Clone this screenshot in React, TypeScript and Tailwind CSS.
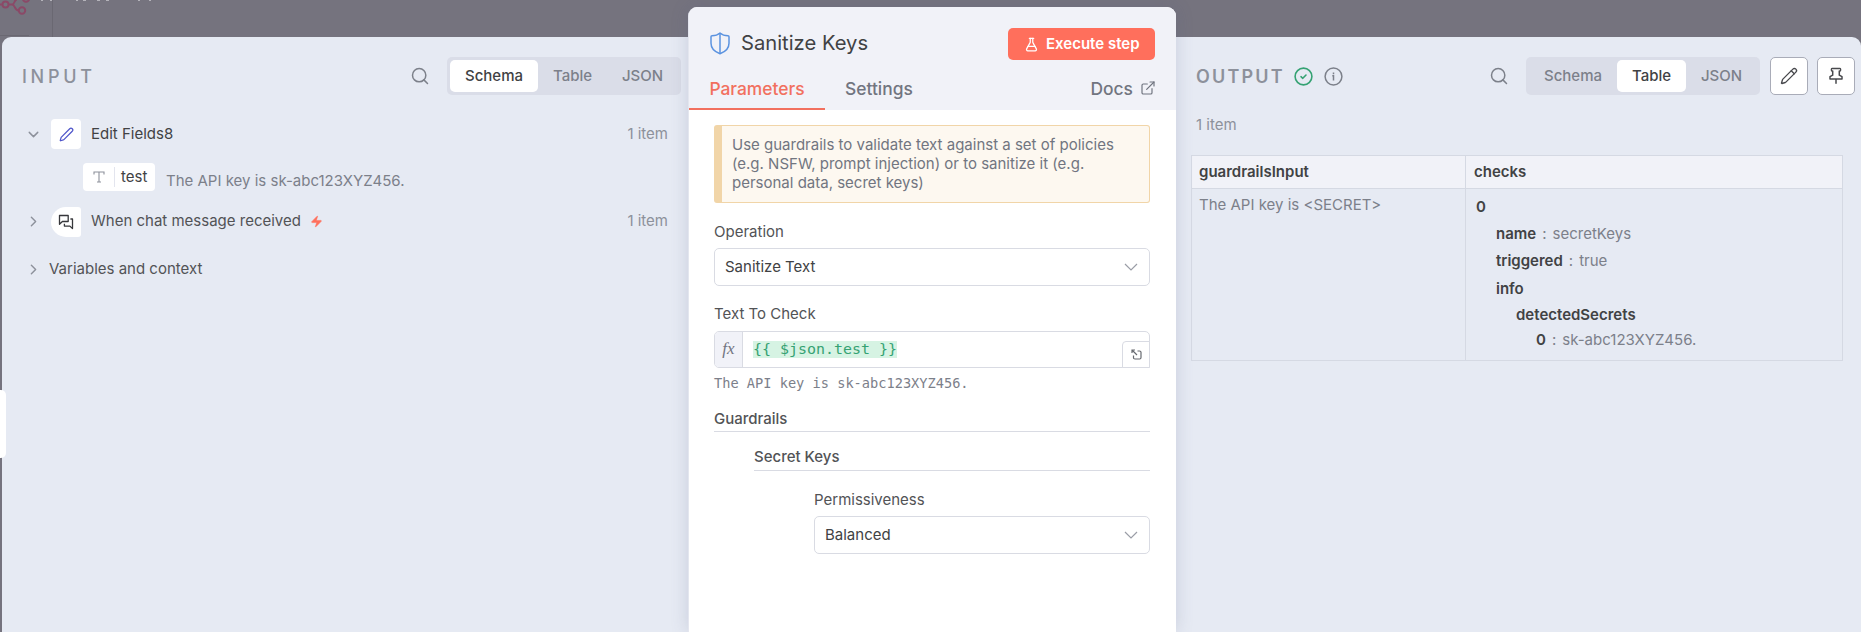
import type { ReactNode } from 'react';
import { ChevronDown, ChevronRight, ExternalLink, FlaskConical, Pen, Pencil, Search, Zap } from 'lucide-react';

const views = [
  { label: 'Schema', width: 'w-[88px]' },
  { label: 'Table', width: 'w-[69px]' },
  { label: 'JSON', width: 'w-[71px]' },
];

function ViewSwitch({ active }: { active: string }) {
  return (
    <div className="flex h-[38px] w-[234px] shrink-0 items-center rounded-[5px] bg-[#dadde8] px-[3px]">
      {views.map((v) => (
        <button
          key={v.label}
          className={`h-8 rounded-[5px] text-[15px] font-medium ${v.width} ${
            v.label === active ? 'bg-white text-[#414244]' : 'text-[#7c808a]'
          }`}
        >
          {v.label}
        </button>
      ))}
    </div>
  );
}

function Select({ value }: { value: string }) {
  return (
    <div className="flex h-[38px] items-center justify-between rounded-[5px] border border-[#d9dbe3] pr-2 pl-[10px] text-[15px] text-[#414244]">
      <span>{value}</span>
      <svg width="20" height="20" viewBox="0 0 20 20" fill="none" stroke="#9a9da6" strokeWidth="1.2">
        <path d="m4 7 6 6 6-6" />
      </svg>
    </div>
  );
}

function IconButton({ children }: { children: ReactNode }) {
  return (
    <button className="flex size-[38px] shrink-0 items-center justify-center rounded-[5px] border border-[#a9acb8] bg-white text-[#48494d]">
      {children}
    </button>
  );
}

function ChatIcon() {
  return (
    <svg width="16" height="16" viewBox="0 0 16 16" fill="none" stroke="#36373b" strokeWidth="1.3" strokeLinejoin="round">
      <path d="M1.5 1.5h8.7v6H4.4L1.5 10.3z" />
      <path d="M12.4 5h2.1v9.6l-2.6-2.5H6.4V9.8" />
    </svg>
  );
}

function ShieldIcon() {
  return (
    <svg width="20" height="23" viewBox="0 0 20 23" fill="none" stroke="#5b93e0" strokeWidth="1.5" strokeLinejoin="round" className="-mt-[2px]">
      <path d="M10 1C8 2.8 5 3.8 2 3.8c-.6 0-1 .4-1 1v6.500c0 5 3.200 8.400 9 10.400 5.800-2 9-5.400 9-10.400V4.800c0-.6-.4-1-1-1C15 3.800 12 2.800 10 1z" />
      <path d="M10 1v20.500" />
    </svg>
  );
}

function SuccessIcon() {
  return (
    <svg width="19" height="19" viewBox="0 0 19 19" fill="none" stroke="#35a273" strokeWidth="1.6" strokeLinecap="round" strokeLinejoin="round">
      <circle cx="9.5" cy="9.5" r="8.400" />
      <path d="m7 9.700 1.800 1.600L12 8" />
    </svg>
  );
}

function InfoIcon() {
  return (
    <svg width="19" height="19" viewBox="0 0 19 19" fill="none" stroke="#7c808a" strokeWidth="1.5">
      <circle cx="9.5" cy="9.500" r="8.400" />
      <path d="M9.500 5.500v1.700M8.300 8.800h1.200v4.600" />
    </svg>
  );
}

function PinIcon() {
  return (
    <svg width="16" height="18" viewBox="0 0 16 18" fill="none" stroke="#48494d" strokeWidth="1.5" strokeLinejoin="round" strokeLinecap="round">
      <path d="M4 1.500h8c.8 0 .8 2.500 0 2.500h-.7v4.200l2.700 1.500V12H2V9.700l2.700-1.500V4H4c-.8 0-.8-2.500 0-2.500zM8 12v4.300" />
    </svg>
  );
}

function InputPanel() {
  return (
    <section className="mt-[37px] ml-[2px] w-[686px] shrink-0 rounded-tl-[9px] bg-[#e6eaf3]">
      <header className="mt-5 flex h-[38px] items-center pl-5">
        <h2 className="flex-1 text-[18px] font-medium tracking-[3.7px] text-[#8d919b]">INPUT</h2>
        <Search size={20} strokeWidth={1.8} className="mr-[17px] text-[#7c808a]" />
        <ViewSwitch active="Schema" />
        <div className="w-[7px]" />
      </header>

      <div className="mt-6 flex h-[30px] items-center pr-[20px] pl-[23px] text-[15px]">
        <ChevronDown size={17} strokeWidth={2} className="mr-[9px] text-[#8d919b]" />
        <div className="mr-[10px] flex size-[30px] items-center justify-center rounded-[4px] bg-white">
          <Pen size={15} strokeWidth={2} className="text-[#5056ca]" />
        </div>
        <span className="flex-1 text-[#414244]">Edit Fields8</span>
        <span className="text-[#8d919b]">1 item</span>
      </div>
      <div className="mt-[14px] flex h-[29px] pl-[81px] text-[15px]">
        <div className="flex h-[28px] w-[72px] items-center rounded-[4px] bg-white">
          <span className="flex w-[31px] justify-center">
            <svg width="12" height="12" viewBox="0 0 12 12" fill="none" stroke="#8d919b" strokeWidth="1.1">
              <path d="M1 3.5V1h10v2.5M6 1v10M4 11h4" />
            </svg>
          </span>
          <span className="h-5 w-px bg-[#e3e5ee]" />
          <span className="pl-[6px] text-[#414244]">test</span>
        </div>
        <span className="mt-[7px] ml-[11px] leading-[22px] text-[#7c808a]">The API key is sk-abc123XYZ456.</span>
      </div>
      <div className="mt-[14px] flex h-[31px] items-center pr-[20px] pl-[23px] text-[15px]">
        <ChevronRight size={17} strokeWidth={2} className="mr-[9px] text-[#8d919b]" />
        <div className="mr-[10px] flex size-[30px] items-center justify-center rounded-l-[15px] rounded-r-[3px] bg-white">
          <ChatIcon />
        </div>
        <span className="text-[#525356]">When chat message received</span>
        <Zap size={13} fill="#ff6f5c" strokeWidth={1} className="ml-[9px] text-[#ff6f5c]" />
        <span className="ml-auto text-[#8d919b]">1 item</span>
      </div>
      <div className="mt-[21px] flex h-[22px] items-center pl-[23px] text-[15px] text-[#525356]">
        <ChevronRight size={17} strokeWidth={2} className="mr-[7px] text-[#8d919b]" />
        Variables and context
      </div>
    </section>
  );
}

function NodePanel() {
  return (
    <section className="z-10 mt-[7px] w-[488px] shrink-0 overflow-hidden rounded-t-[9px] border-l border-[#e4e6ef] bg-white shadow-[0_0_18px_rgba(80,90,130,0.2)]">
      <header className="h-[103px] bg-[#f1f2f8] pt-[21px]">
        <div className="flex h-8 items-center pr-[21px] pl-[21px]">
          <ShieldIcon />
          <h1 className="-mt-[2px] ml-[11px] flex-1 text-[20.2px] text-[#414244]">Sanitize Keys</h1>
          <button className="flex h-8 w-[147px] items-center rounded-[5px] bg-[#ff6f5c] pl-4 text-[15px] font-semibold text-white">
            <FlaskConical size={15} strokeWidth={2} className="mr-[7px]" />
            Execute step
          </button>
        </div>
        <nav className="mt-[7px] flex h-[43px] text-[17.4px] font-medium text-[#717580]">
          <div className="flex w-[136px] items-center justify-center border-b-2 border-[#f2705f] pt-1 text-[#f2705f]">Parameters</div>
          <div className="flex items-center border-b-2 border-transparent pt-1 pl-5">Settings</div>
          <div className="ml-auto flex items-center border-b-2 border-transparent pt-1 pr-5">
            Docs
            <ExternalLink size={16} strokeWidth={1.8} className="mb-[3px] ml-[7px]" />
          </div>
        </nav>
      </header>

      <div className="pr-[26px] pl-[25px] text-[15px] text-[#525356]">
        <p className="mt-[15px] h-[78px] rounded-[3px] border border-l-8 border-[#f1d5a8] bg-[#fdf8f0] pt-[9px] pl-[10px] leading-[19px] text-[#717580]">
          Use guardrails to validate text against a set of policies<br />
          (e.g. NSFW, prompt injection) or to sanitize it (e.g.<br />
          personal data, secret keys)
        </p>
        <div className="mt-[18px] mb-[5px] leading-[22px]">Operation</div>
        <Select value="Sanitize Text" />
        <div className="mt-[17px] mb-[6px] leading-[22px]">Text To Check</div>
        <div className="relative flex h-[37px] items-center rounded-[5px] rounded-br-none border border-[#d9dbe3]">
          <span className="flex h-full w-[28px] items-center justify-center rounded-l-[4px] border-r border-[#d9dbe3] bg-[#f1f2f8] pb-px font-['Liberation_Serif',serif] text-[17px] text-[#717580] italic">
            fx
          </span>
          <code className="ml-[10px] bg-[#d6f3e3] font-['DejaVu_Sans_Mono',monospace] text-[14.95px] leading-[17px] text-[#35a273]">
            {'{{ $json.test }}'}
          </code>
          <span className="absolute -right-px -bottom-px flex h-[27px] w-7 items-center justify-center rounded-tl-[4px] border border-[#d9dbe3] bg-white">
            <svg width="11" height="11" viewBox="0 0 11 11" fill="none" stroke="#66696f" strokeWidth="1.2">
              <path d="M1 4V1h3M1 1l5 5M6.500 2h2c.8 0 1.500.5 1.500 1.200v5.300c0 .8-.5 1.500-1.300 1.500H4c-.8 0-1.500-.5-1.500-1.300V6.500" />
            </svg>
          </span>
        </div>
        <div className="mt-1 font-['DejaVu_Sans_Mono',monospace] text-[13.65px] leading-[22px] text-[#7c808a]">
          The API key is sk-abc123XYZ456.
        </div>
        <div className="mt-[14px] h-[24px] border-b border-[#d9dbe3] leading-[22px] font-medium">Guardrails</div>
        <div className="ml-10 pt-[14px]">
          <div className="h-[25px] border-b border-[#d9dbe3] leading-[22px] font-medium">Secret Keys</div>
        </div>
        <div className="mt-[18px] ml-[100px]">
          <div className="mb-[5px] leading-[22px]">Permissiveness</div>
          <Select value="Balanced" />
        </div>
      </div>
    </section>
  );
}

const checkRows = [
  { name: '0', value: '', style: 'h-[28px] pl-[10px]' },
  { name: 'name', value: 'secretKeys', style: 'h-[26px] pl-[30px]' },
  { name: 'triggered', value: 'true', style: 'h-[28px] pl-[30px]' },
  { name: 'info', value: '', style: 'h-[28px] pl-[30px]' },
  { name: 'detectedSecrets', value: '', style: 'h-[24px] pl-[50px]' },
  { name: '0', value: 'sk-abc123XYZ456.', style: 'h-[26px] pl-[70px]' },
];

function OutputPanel() {
  return (
    <section className="mt-[37px] w-[685px] shrink-0 rounded-tr-[9px] bg-[#e6eaf3]">
      <header className="mt-5 flex h-[38px] items-center pr-[6px] pl-5">
        <h2 className="mr-[9px] text-[18px] font-semibold tracking-[2.2px] text-[#8d919b]">OUTPUT</h2>
        <div className="flex gap-[11px]">
          <SuccessIcon />
          <InfoIcon />
        </div>
        <Search size={20} strokeWidth={1.8} className="mr-[17px] ml-auto text-[#7c808a]" />
        <ViewSwitch active="Table" />
        <div className="ml-[10px] flex gap-[9px]">
          <IconButton><Pencil size={18} strokeWidth={1.8} /></IconButton>
          <IconButton><PinIcon /></IconButton>
        </div>
      </header>
      <div className="mt-[19px] ml-5 text-[15px] leading-[22px] text-[#8d919b]">1 item</div>
      <table className="mt-[19px] ml-[15px] w-[652px] table-fixed border-collapse text-[15px] text-[#7c808a]">
        <colgroup>
          <col className="w-[274px]" />
          <col />
        </colgroup>
        <thead>
          <tr className="h-[33px] bg-[#f1f2f8] text-left text-[#414244]">
            <th className="border border-[#d5d9e3] px-[7px] font-semibold">guardrailsInput</th>
            <th className="border border-[#d5d9e3] px-2 font-semibold">checks</th>
          </tr>
        </thead>
        <tbody>
          <tr className="h-[172px]">
            <td className="border border-[#d5d9e3] px-[7px] pt-[5px] align-top">The API key is &lt;SECRET&gt;</td>
            <td className="border border-[#d5d9e3] pt-1 align-top">
              {checkRows.map((row, i) => (
                <div key={i} className={`flex items-center ${row.style}`}>
                  <span className="font-semibold text-[#414244]">{row.name}</span>
                  {row.value && (
                    <>
                      <span className="mx-[6px]">:</span>
                      <span>{row.value}</span>
                    </>
                  )}
                </div>
              ))}
            </td>
          </tr>
        </tbody>
      </table>
    </section>
  );
}

// Dimmed corner of the canvas behind the dialog
function Backdrop() {
  return (
    <svg className="absolute top-0 left-0" width="180" height="37" viewBox="0 0 180 37" fill="none">
      <path d="M52.5 0v37M0 35.5h29" stroke="#6a6872" />
      <path
        d="M41 0h2M50 0h2M76 0h2M83 0h3M97 0h3M106 0h3M138 0h2M149 0h2"
        stroke="#b4b3ba"
        strokeWidth="2"
      />
      <g stroke="#8b4967" strokeWidth="2">
        <circle cx="5.5" cy="4.5" r="3" />
        <circle cx="22" cy="10.5" r="3.2" />
        <circle cx="26" cy="-1.5" r="3.2" />
        <path d="M0 4.5h2.5M8.5 4.5H12c3.5 0 2 6 7 6M12 4.5c3 0 2-5 5-5" />
      </g>
    </svg>
  );
}

export default function App() {
  return (
    <div className="relative flex h-[632px] w-[1861px] overflow-hidden bg-[#75737e] font-[Inter,sans-serif]">
      <Backdrop />
      <InputPanel />
      <NodePanel />
      <OutputPanel />
      <div className="absolute top-[390px] left-0 h-[68px] w-[6px] rounded-r-[5px] bg-white" />
    </div>
  );
}
